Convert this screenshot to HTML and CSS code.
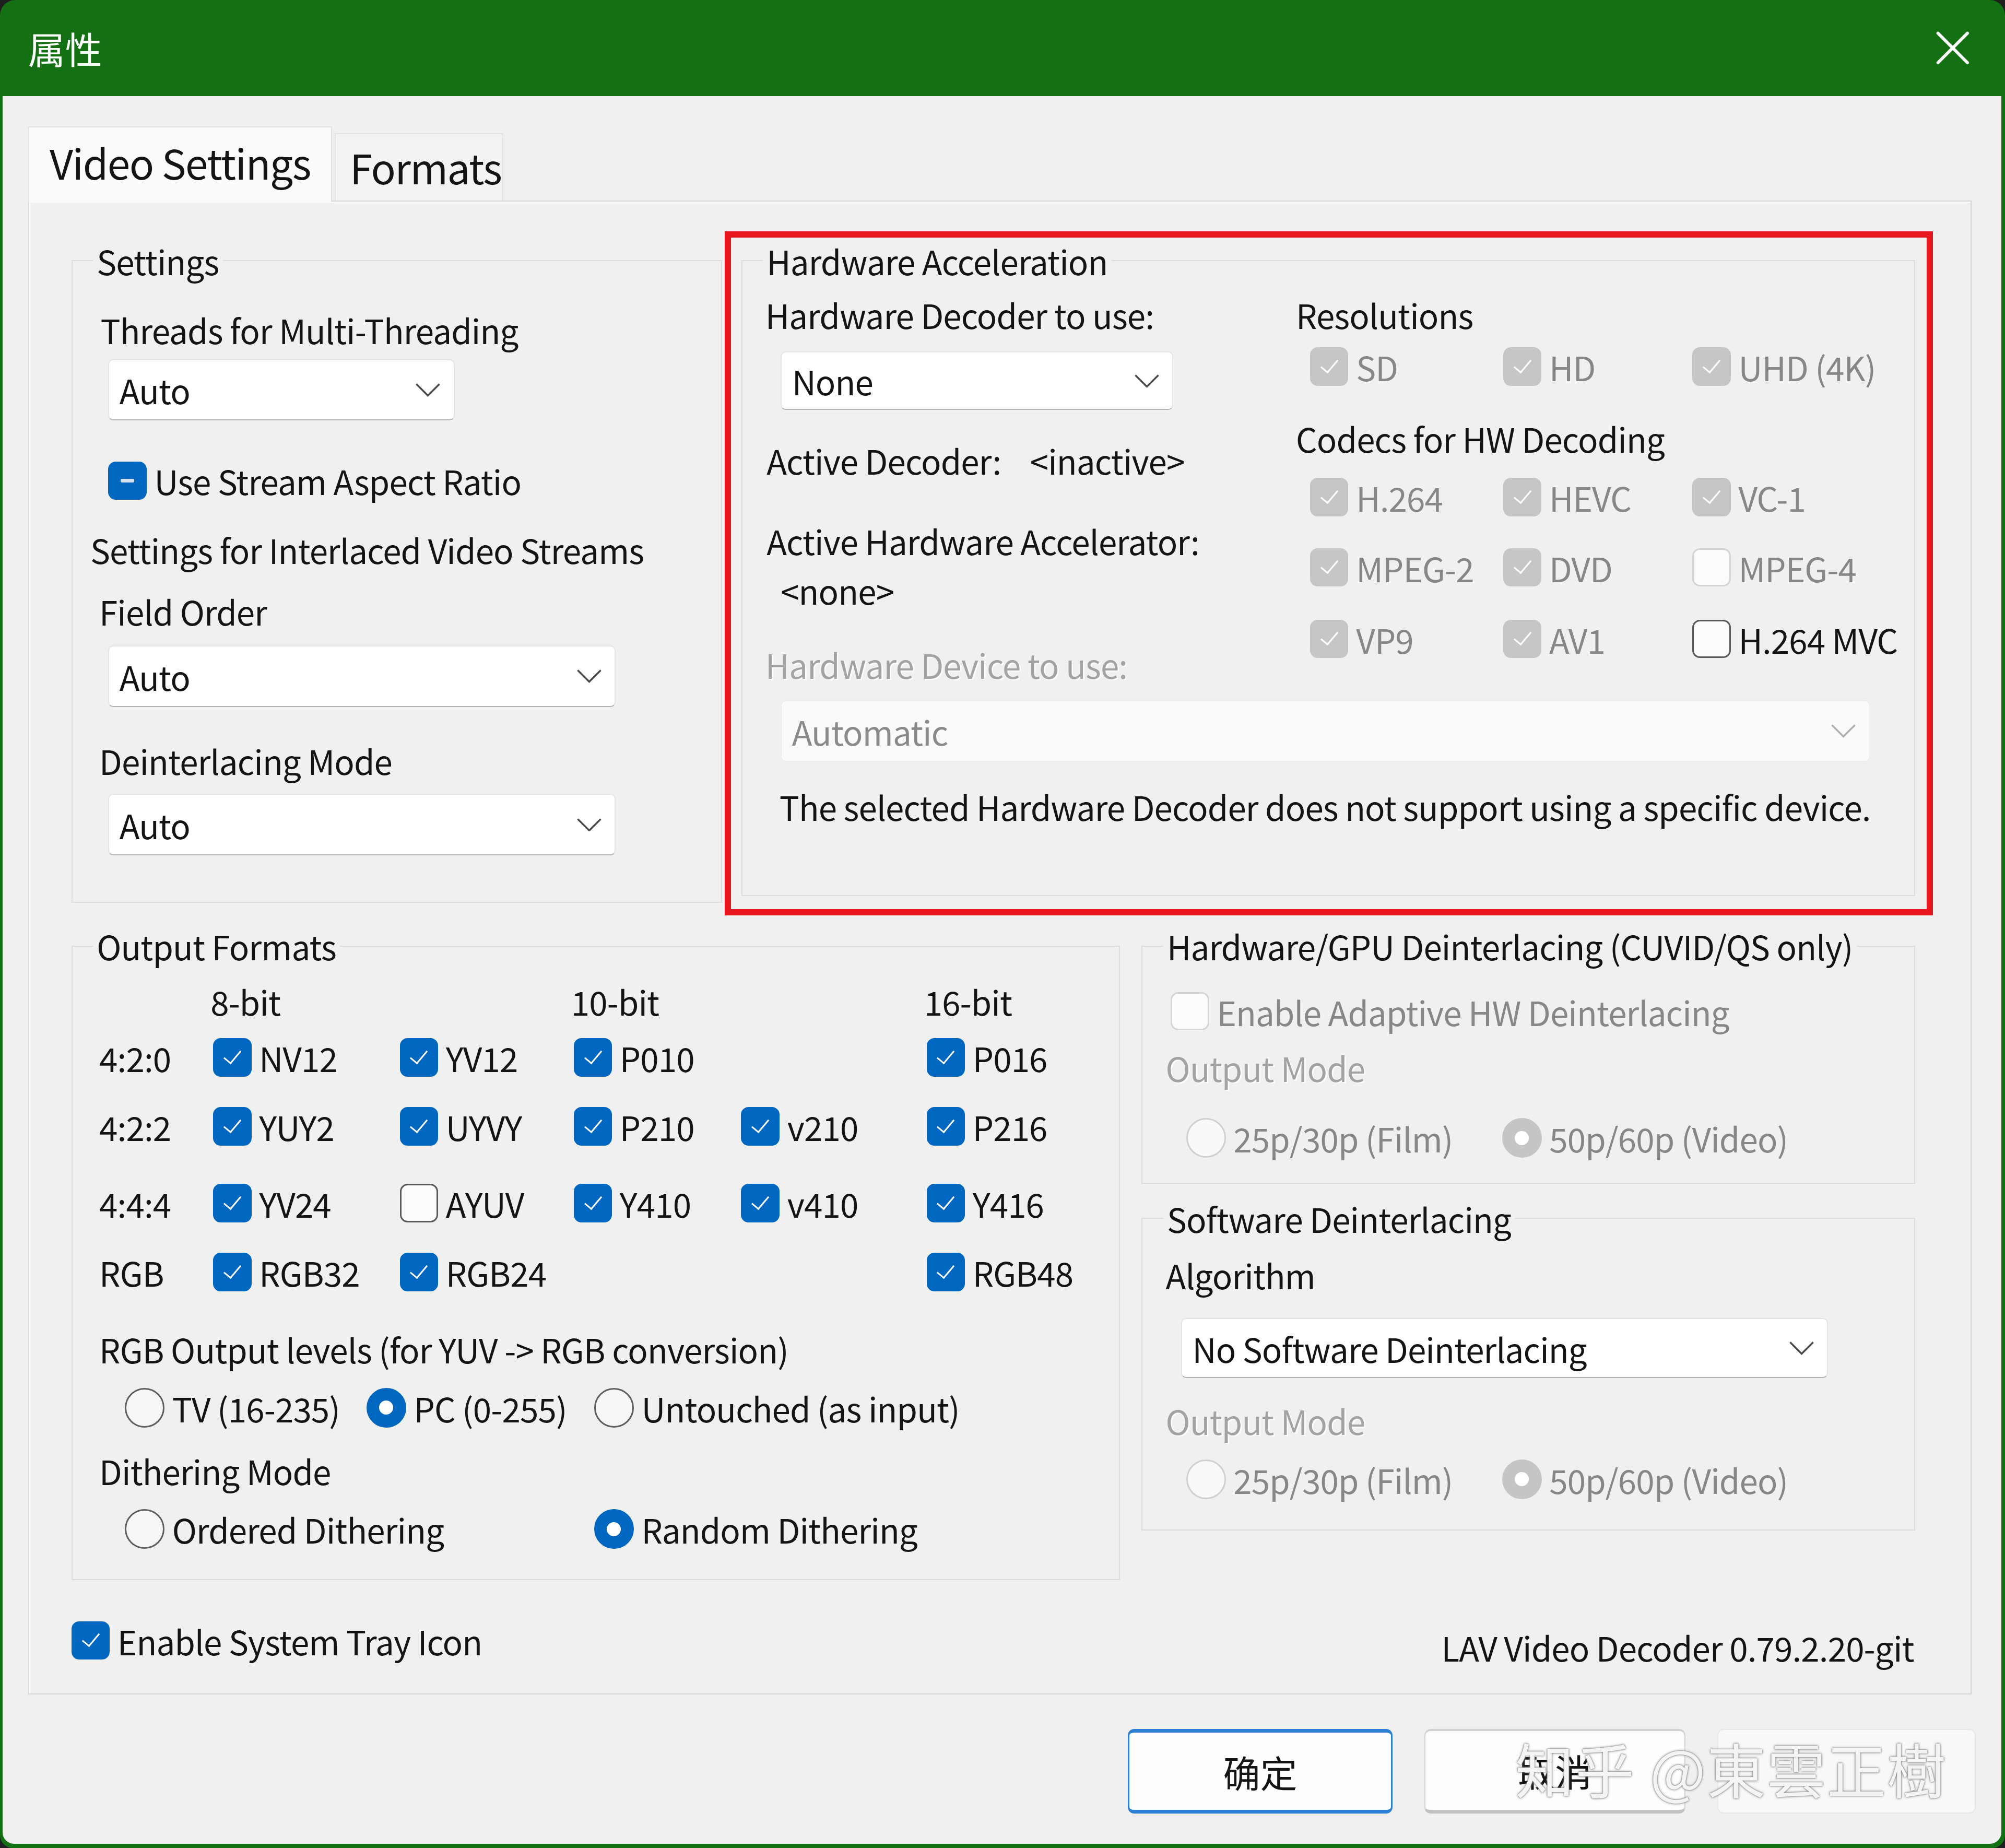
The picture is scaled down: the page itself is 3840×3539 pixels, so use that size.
FILE: index.html
```html
<!DOCTYPE html>
<html>
<head>
    <meta charset="UTF-8">
    <title>属性</title>
    <link rel="stylesheet" href="styles.css">
</head>
<body>
<div class="window">
  <div class="titlebar">
    <span class="title">属性</span>
    <svg class="close" viewBox="0 0 26 26"><path d="M1.5 1.5 L24.5 24.5 M24.5 1.5 L1.5 24.5"/></svg>
  </div>

  <div class="client">
    <div class="tabs">
      <div class="tab active">Video Settings</div>
      <div class="tab second">Formats</div>
    </div>

    <div class="panel">
      <div class="row-top">
        <!-- Settings -->
        <fieldset class="group settings">
          <legend>Settings</legend>
          <div class="line mt24 ml1">Threads for Multi-Threading</div>
          <div class="select mt7 ml7 w271"><span>Auto</span><svg class="chev" viewBox="0 0 20 11"><polyline points="1,1 10,10 19,1"/></svg></div>
          <label class="check mt31 ml7"><span class="box mixed"></span>Use Stream Aspect Ratio</label>
          <div class="line mt22 mln7">Settings for Interlaced Video Streams</div>
          <div class="line mt16">Field Order</div>
          <div class="select mt11 ml7 w397"><span>Auto</span><svg class="chev" viewBox="0 0 20 11"><polyline points="1,1 10,10 19,1"/></svg></div>
          <div class="line mt26">Deinterlacing Mode</div>
          <div class="select mt10 ml7 w397"><span>Auto</span><svg class="chev" viewBox="0 0 20 11"><polyline points="1,1 10,10 19,1"/></svg></div>
        </fieldset>

        <!-- Hardware Acceleration (marked in red) -->
        <div class="highlight">
          <fieldset class="group hwaccel">
            <legend>Hardware Acceleration</legend>
            <div class="hw-cols">
              <div class="hw-left">
                <div class="line mt12 mln3">Hardware Decoder to use:</div>
                <div class="select mt13 ml9 w307 h46"><span>None</span><svg class="chev" viewBox="0 0 20 11"><polyline points="1,1 10,10 19,1"/></svg></div>
                <div class="line mt23 mln2"><span class="key">Active Decoder:</span><span>&lt;inactive&gt;</span></div>
                <div class="line mt31 mln2">Active Hardware Accelerator:</div>
                <div class="line mt7 ml9">&lt;none&gt;</div>
                <div class="line mt26 mln3 etched">Hardware Device to use:</div>
              </div>
              <div class="hw-right">
                <div class="line mt12">Resolutions</div>
                <div class="cb-grid mt9 muted">
                  <label class="check"><span class="box dis"></span>SD</label>
                  <label class="check"><span class="box dis"></span>HD</label>
                  <label class="check"><span class="box dis"></span>UHD (4K)</label>
                </div>
                <div class="line mt24">Codecs for HW Decoding</div>
                <div class="cb-grid mt14 muted">
                  <label class="check"><span class="box dis"></span>H.264</label>
                  <label class="check"><span class="box dis"></span>HEVC</label>
                  <label class="check"><span class="box dis"></span>VC-1</label>
                </div>
                <div class="cb-grid mt23 muted">
                  <label class="check"><span class="box dis"></span>MPEG-2</label>
                  <label class="check"><span class="box dis"></span>DVD</label>
                  <label class="check"><span class="box dis-off"></span>MPEG-4</label>
                </div>
                <div class="cb-grid mt24 muted">
                  <label class="check"><span class="box dis"></span>VP9</label>
                  <label class="check"><span class="box dis"></span>AV1</label>
                  <label class="check enabled"><span class="box"></span>H.264 MVC</label>
                </div>
              </div>
            </div>
            <div class="select disabled mt12 ml9 w852"><span>Automatic</span><svg class="chev" viewBox="0 0 20 11"><polyline points="1,1 10,10 19,1"/></svg></div>
            <div class="line mt19 ml8">The selected Hardware Decoder does not support using a specific device.</div>
          </fieldset>
        </div>
      </div>

      <div class="row-bottom">
        <!-- Output Formats -->
        <fieldset class="group output">
          <legend>Output Formats</legend>
          <div class="fmt-row mt13">
            <span></span><span class="bits">8-bit</span><span></span><span class="bits">10-bit</span><span></span><span class="bits">16-bit</span>
          </div>
          <div class="fmt-row mt12">
            <span>4:2:0</span>
            <label class="check"><span class="box on"></span>NV12</label>
            <label class="check"><span class="box on"></span>YV12</label>
            <label class="check"><span class="box on"></span>P010</label>
            <span></span>
            <label class="check"><span class="box on"></span>P016</label>
          </div>
          <div class="fmt-row mt22">
            <span>4:2:2</span>
            <label class="check"><span class="box on"></span>YUY2</label>
            <label class="check"><span class="box on"></span>UYVY</label>
            <label class="check"><span class="box on"></span>P210</label>
            <label class="check"><span class="box on"></span>v210</label>
            <label class="check"><span class="box on"></span>P216</label>
          </div>
          <div class="fmt-row mt28">
            <span>4:4:4</span>
            <label class="check"><span class="box on"></span>YV24</label>
            <label class="check"><span class="box"></span>AYUV</label>
            <label class="check"><span class="box on"></span>Y410</label>
            <label class="check"><span class="box on"></span>v410</label>
            <label class="check"><span class="box on"></span>Y416</label>
          </div>
          <div class="fmt-row mt22">
            <span>RGB</span>
            <label class="check"><span class="box on"></span>RGB32</label>
            <label class="check"><span class="box on"></span>RGB24</label>
            <span></span>
            <span></span>
            <label class="check"><span class="box on"></span>RGB48</label>
          </div>
          <div class="line mt28">RGB Output levels (for YUV -&gt; RGB conversion)</div>
          <div class="radio-row levels mt14 ml20">
            <label class="radio"><span class="dot"></span>TV (16-235)</label>
            <label class="radio"><span class="dot on"></span>PC (0-255)</label>
            <label class="radio"><span class="dot"></span>Untouched (as input)</label>
          </div>
          <div class="line mt17">Dithering Mode</div>
          <div class="radio-row dither mt14 ml20">
            <label class="radio"><span class="dot"></span>Ordered Dithering</label>
            <label class="radio"><span class="dot on"></span>Random Dithering</label>
          </div>
        </fieldset>

        <div class="right-col">
          <fieldset class="group hwdeint">
            <legend>Hardware/GPU Deinterlacing (CUVID/QS only)</legend>
            <label class="check mt21 ml1 muted"><span class="box dis-off"></span>Enable Adaptive HW Deinterlacing</label>
            <div class="line mt12 mln3 etched">Output Mode</div>
            <div class="radio-row modes mt23 ml13 muted">
              <label class="radio"><span class="dot dis"></span>25p/30p (Film)</label>
              <label class="radio"><span class="dot dis-on"></span>50p/60p (Video)</label>
            </div>
          </fieldset>

          <fieldset class="group swdeint">
            <legend>Software Deinterlacing</legend>
            <div class="line mt14 mln3">Algorithm</div>
            <div class="select mt18 ml9 w506 h47"><span>No Software Deinterlacing</span><svg class="chev" viewBox="0 0 20 11"><polyline points="1,1 10,10 19,1"/></svg></div>
            <div class="line mt17 mln3 etched">Output Mode</div>
            <div class="radio-row modes mt14 ml13 muted">
              <label class="radio"><span class="dot dis"></span>25p/30p (Film)</label>
              <label class="radio"><span class="dot dis-on"></span>50p/60p (Video)</label>
            </div>
          </fieldset>
        </div>
      </div>

      <div class="footer-row">
        <label class="check"><span class="box on"></span>Enable System Tray Icon</label>
        <span class="version">LAV Video Decoder 0.79.2.20-git</span>
      </div>
    </div>

    <div class="buttons">
      <button class="btn default">确定</button>
      <button class="btn">取消</button>
      <button class="btn disabled"></button>
      <span class="watermark">知乎 @東雲正樹</span>
    </div>
  </div>
</div>
</body>
</html>
```

FILE: styles.css
```css
html, body {
  margin: 0;
  background: #1e1e1e;
  overflow: hidden;
}

body {
  font-family: "Noto Sans CJK SC", "Noto Sans", sans-serif;
  color: #141414;
}

/* whole dialog is laid out at 1568 wide, then scaled to the 3840 viewport */
.window {
  zoom: 2.449;
  width: 1568px;
  height: 1445px;
  box-sizing: border-box;
  background: #137013;
  border-radius: 12px 12px 10px 10px;
  padding: 0 3px 3px 2px;
  display: flex;
  flex-direction: column;
  font-size: 26px;
  letter-spacing: -0.35px;
}

.titlebar {
  height: 75px;
  flex: none;
  display: flex;
  align-items: center;
  justify-content: space-between;
  padding: 0 25px 0 20px;
}

.title {
  color: #fff;
  font-size: 29px;
  line-height: 1;
  letter-spacing: 0;
}

.close {
  width: 26px;
  height: 26px;
  fill: none;
  stroke: #fff;
  stroke-width: 2.4;
  stroke-linecap: round;
}

.client {
  flex: 1;
  background: #f0f0f0;
  border-radius: 0 0 9px 9px;
  display: flex;
  flex-direction: column;
}

/* tabs */
.tabs {
  display: flex;
  align-items: flex-end;
  gap: 2px;
  margin: 24px 0 0 20px;
  position: relative;
  z-index: 1;
}

.tab {
  box-sizing: border-box;
  height: 53px;
  line-height: 51px;
  padding: 0 16px;
  font-size: 32px;
  letter-spacing: -0.6px;
  background: #f3f3f3;
  border: 1px solid #e2e2e2;
  border-bottom: none;
}

.tab.second {
  width: 132px;
  padding: 0 0 0 11px;
}

.tab.active {
  height: 59px;
  line-height: 54px;
  background: #fafafa;
  margin-bottom: -1px;
}

.panel {
  box-sizing: border-box;
  width: 1520px;
  height: 1168px;
  margin-left: 20px;
  padding: 23px 0 0 33px;
  background: #f0f0f0;
  border: 1px solid #d6d6d6;
  box-shadow: inset 1px 1px 0 #fafafa;
}

/* group boxes */
.group {
  box-sizing: border-box;
  margin: 0;
  padding: 0 0 0 21px;
  border: 1px solid #dcdcdc;
  min-width: 0;
}

.group legend {
  margin-left: -5px;
  padding: 0 3px;
  height: 28px;
  line-height: 28px;
}

.row-top {
  display: flex;
  align-items: flex-start;
}

.settings {
  margin-top: 9px;
  width: 509px;
  height: 516px;
}

.highlight {
  box-sizing: border-box;
  width: 945px;
  height: 535px;
  margin-left: 2px;
  padding: 4px 0 0 8px;
  border: 5px solid #e8171f;
}

.hwaccel {
  width: 918px;
  height: 511px;
}

.hw-cols {
  display: flex;
  align-items: flex-start;
}

.hw-left {
  width: 412px;
  flex: none;
}

.key {
  display: inline-block;
  width: 206px;
}

.cb-grid {
  display: grid;
  grid-template-columns: 151px 148px auto;
  margin-left: 11px;
}

.row-bottom {
  display: flex;
  align-items: flex-start;
  margin-top: 10px;
}

.output {
  width: 820px;
  height: 510px;
}

.fmt-row {
  display: grid;
  grid-template-columns: 89px 146px 136px 131px 145px auto;
  align-items: center;
  height: 32px;
  line-height: 32px;
}

.bits {
  margin-left: -2px;
}

.right-col {
  width: 605px;
  margin-left: 17px;
}

.hwdeint {
  height: 200px;
}

.swdeint {
  height: 258px;
  margin-top: 13px;
}

.footer-row {
  display: flex;
  align-items: center;
  justify-content: space-between;
  width: 1441px;
  height: 32px;
  margin-top: 31px;
}

.version {
  margin-top: 10px;
}

/* text lines */
.line {
  height: 32px;
  line-height: 32px;
  white-space: nowrap;
}

.etched {
  color: #a3a3a3;
  text-shadow: 1px 1px 0 #fff;
}

.muted {
  color: #878787;
}

.muted .enabled {
  color: #141414;
}

/* combo boxes */
.select {
  box-sizing: border-box;
  display: flex;
  align-items: center;
  justify-content: space-between;
  height: 48px;
  padding: 0 10px 0 8px;
  background: #fff;
  border: 1px solid #e4e4e4;
  border-bottom-color: #b3b3b3;
  border-radius: 4px;
  white-space: nowrap;
}

.select.disabled {
  background: #fafafa;
  border-color: #ededed;
  color: #8a8a8a;
}

.chev {
  width: 20px;
  height: 11px;
  fill: none;
  stroke: #4a4a4a;
  stroke-width: 1.4;
}

.select.disabled .chev {
  stroke: #b0b0b0;
}

.w271 { width: 271px; }
.w307 { width: 307px; }
.w397 { width: 397px; }
.w506 { width: 506px; }
.w852 { width: 852px; }
.h46 { height: 46px; }
.h47 { height: 47px; }

/* check boxes */
.check {
  display: flex;
  align-items: center;
  gap: 6px;
  height: 32px;
  white-space: nowrap;
}

.box {
  box-sizing: border-box;
  flex: none;
  width: 30px;
  height: 30px;
  display: flex;
  align-items: center;
  justify-content: center;
  background: #fbfbfb;
  border: 1.5px solid #595959;
  border-radius: 6px;
}

.box.on,
.box.mixed {
  background: #0067c0;
  border-color: #0067c0;
}

.box.on::after,
.box.dis::after {
  content: "";
  width: 6px;
  height: 12px;
  border: solid #fff;
  border-width: 0 1.6px 1.6px 0;
  transform: translateY(-2px) rotate(40deg);
}

.box.mixed::after {
  content: "";
  width: 11px;
  height: 3px;
  border-radius: 1px;
  background: #d3e3f4;
}

.box.dis {
  background: #c6c6c6;
  border-color: #c6c6c6;
}

.box.dis-off {
  background: #fbfbfb;
  border-color: #d4d4d4;
}

/* radio buttons */
.radio-row {
  display: grid;
  height: 32px;
}

.levels { grid-template-columns: 189px 178px auto; }
.dither { grid-template-columns: 367px auto; }
.modes { grid-template-columns: 247px auto; }

.radio {
  display: flex;
  align-items: center;
  gap: 6px;
  height: 32px;
  white-space: nowrap;
}

.dot {
  box-sizing: border-box;
  flex: none;
  width: 31px;
  height: 31px;
  display: flex;
  align-items: center;
  justify-content: center;
  border-radius: 50%;
  background: #f6f6f6;
  border: 1.5px solid #5e5e5e;
}

.dot.on {
  background: #0067c0;
  border-color: #0067c0;
}

.dot.on::after,
.dot.dis-on::after {
  content: "";
  width: 11px;
  height: 11px;
  border-radius: 50%;
  background: #fff;
}

.dot.dis {
  background: #f9f9f9;
  border-color: #d0d0d0;
}

.dot.dis-on {
  background: #c5c5c5;
  border-color: #c5c5c5;
}

/* dialog buttons */
.buttons {
  position: relative;
  display: flex;
  justify-content: flex-end;
  gap: 25px;
  margin-top: 27px;
  padding-right: 20px;
}

.btn {
  box-sizing: border-box;
  width: 204px;
  height: 66px;
  padding: 0;
  font-family: inherit;
  font-size: 29px;
  letter-spacing: 0;
  color: #141414;
  background: #fdfdfd;
  border: 1px solid #d3d3d3;
  border-top: 2px solid #d0d0d0;
  border-bottom: 3px solid #c2c2c2;
  border-radius: 5px;
}

.btn.default {
  width: 207px;
  border: 1.5px solid #2d7fd4;
  border-top-width: 3px;
  border-bottom-width: 3px;
}

.btn.disabled {
  width: 202px;
  background: #f8f8f8;
  border: 1px solid #e8e8e8;
}

.watermark {
  position: absolute;
  left: 1183px;
  top: 4px;
  font-size: 46px;
  line-height: 52px;
  letter-spacing: 1px;
  white-space: nowrap;
  color: rgba(255, 255, 255, 0.92);
  text-shadow: 0 0 1px #6f6f6f, 0 0 2px #8a8a8a;
  pointer-events: none;
}

/* spacing helpers */
.mt7 { margin-top: 7px; }
.mt9 { margin-top: 9px; }
.mt10 { margin-top: 10px; }
.mt11 { margin-top: 11px; }
.mt12 { margin-top: 12px; }
.mt13 { margin-top: 13px; }
.mt14 { margin-top: 14px; }
.mt16 { margin-top: 16px; }
.mt17 { margin-top: 17px; }
.mt18 { margin-top: 18px; }
.mt19 { margin-top: 19px; }
.mt21 { margin-top: 21px; }
.mt22 { margin-top: 22px; }
.mt23 { margin-top: 23px; }
.mt24 { margin-top: 24px; }
.mt26 { margin-top: 26px; }
.mt28 { margin-top: 28px; }
.mt31 { margin-top: 31px; }

.ml1 { margin-left: 1px; }
.ml7 { margin-left: 7px; }
.ml8 { margin-left: 8px; }
.ml9 { margin-left: 9px; }
.ml13 { margin-left: 13px; }
.ml20 { margin-left: 20px; }
.mln2 { margin-left: -2px; }
.mln3 { margin-left: -3px; }
.mln7 { margin-left: -7px; }
```
